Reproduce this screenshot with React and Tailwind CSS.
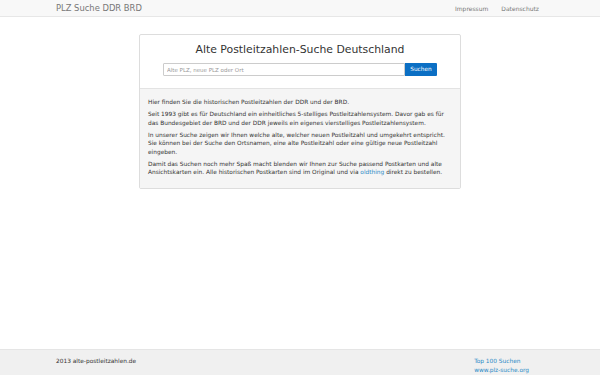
export default function App() {
  return (
    <div className="min-h-[375px] flex flex-col bg-white font-['DejaVu_Sans',sans-serif] text-[#333]">
      <nav className="h-[17px] bg-[#f8f8f8] border-b border-[#e7e7e7] flex items-center justify-between pl-[56px] pr-[61px]">
        <span className="text-[8.4px] text-[#777]">PLZ Suche DDR BRD</span>
        <div className="flex gap-[13px] text-[6px] text-[#777]">
          <span>Impressum</span>
          <span>Datenschutz</span>
        </div>
      </nav>

      <main className="flex-1 flex justify-center pt-[17px]">
        <div className="w-[322px] h-[155px] border border-[#ddd] rounded-[2px] flex flex-col">
          <div className="h-[53px] flex flex-col items-center pt-[8px]">
            <h1 className="text-[10.85px] leading-[14px] text-[#333]">Alte Postleitzahlen-Suche Deutschland</h1>
            <div className="flex mt-[6px]">
              <input
                className="w-[242px] h-[13px] border border-[#ccc] rounded-l-[1px] px-[3px] text-[5.5px] text-[#999] placeholder:text-[#999] outline-none"
                placeholder="Alte PLZ, neue PLZ oder Ort"
              />
              <button className="w-[32px] h-[13px] bg-[#0b6fc4] text-white text-[5.8px] rounded-r-[1px]">Suchen</button>
            </div>
          </div>
          <div className="flex-1 bg-[#f5f5f5] border-t border-[#e3e3e3] px-[8px] pt-[9px] text-[5.85px] leading-[8.5px] text-[#333] whitespace-nowrap flex flex-col gap-[3.5px]">
            <p>Hier finden Sie die historischen Postleitzahlen der DDR und der BRD.</p>
            <p>
              Seit 1993 gibt es für Deutschland ein einheitliches 5-stelliges Postleitzahlensystem. Davor gab es für
              <br />
              das Bundesgebiet der BRD und der DDR jeweils ein eigenes vierstelliges Postleitzahlensystem.
            </p>
            <p>
              In unserer Suche zeigen wir Ihnen welche alte, welcher neuen Postleitzahl und umgekehrt entspricht.
              <br />
              Sie können bei der Suche den Ortsnamen, eine alte Postleitzahl oder eine gültige neue Postleitzahl
              <br />
              eingeben.
            </p>
            <p>
              Damit das Suchen noch mehr Spaß macht blenden wir Ihnen zur Suche passend Postkarten und alte
              <br />
              Ansichtskarten ein. Alle historischen Postkarten sind im Original und via{" "}
              <span className="text-[#2a8ac6]">oldthing</span> direkt zu bestellen.
            </p>
          </div>
        </div>
      </main>

      <footer className="h-[26px] bg-[#f0f0f0] border-t border-[#e5e5e5] flex justify-between pl-[56px] pr-[71px] pt-[7px] text-[5.85px] leading-[8.5px]">
        <span className="text-[#333]">2013 alte-postleitzahlen.de</span>
        <div className="flex flex-col text-[#2a8ac6]">
          <span>Top 100 Suchen</span>
          <span>www.plz-suche.org</span>
        </div>
      </footer>
    </div>
  );
}
